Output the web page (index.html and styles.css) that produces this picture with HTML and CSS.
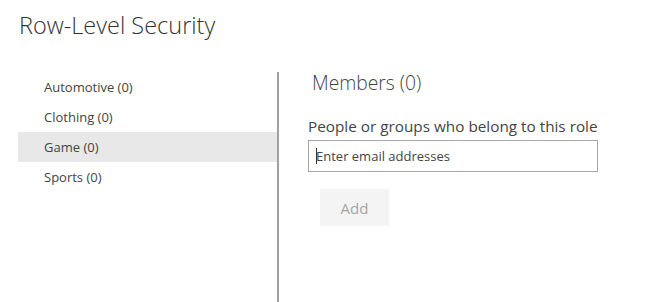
FILE: index.html
```html
<!DOCTYPE html>
<html lang="en">
<head>
  <meta charset="UTF-8" />
  <title>Row-Level Security</title>
  <link rel="stylesheet" href="styles.css">
</head>
<body>

<h1 class="title">Row-Level Security</h1>

<div class="rls">
  <ul class="roles">
    <li class="role">Automotive (0)</li>
    <li class="role">Clothing (0)</li>
    <li class="role selected">Game (0)</li>
    <li class="role">Sports (0)</li>
  </ul>

  <div class="members">
    <h2>Members (0)</h2>
    <label for="emails">People or groups who belong to this role</label>
    <div class="email-box">
      <span class="caret"></span>
      <input type="text" id="emails" placeholder="Enter email addresses" />
    </div>
    <button class="add" disabled>Add</button>
  </div>
</div>

</body>
</html>
```

FILE: styles.css
```css
body {
  font-family: "Open Sans", "Noto Sans", sans-serif;
  color: #333;
  background: #fff;
  margin: 0;
}

.title {
  font-size: 23.5px;
  font-weight: 300;
  color: #333;
  margin: 0;
  padding: 9px 0 0 19px;
  height: 72px;
  box-sizing: border-box;
}

.rls {
  display: flex;
  margin-left: 18px;
  height: 230px;
}

.roles {
  list-style: none;
  margin: 0;
  padding: 0;
  width: 259px;
  border-right: 2px solid #a0a0a0;
}

.role {
  height: 30px;
  line-height: 30px;
  padding-left: 26px;
  font-size: 13px;
  color: #444;
}

.role.selected {
  background-color: #e8e8e8;
}

.members {
  padding-left: 29px;
}

.members h2 {
  font-size: 19.3px;
  font-weight: 300;
  color: #444;
  margin: 0 0 0 4px;
  line-height: 22px;
}

.members label {
  display: block;
  font-size: 15.3px;
  color: #444;
  margin-top: 22px;
  line-height: 20px;
}

.email-box {
  position: relative;
  width: 288px;
  height: 30px;
  border: 1px solid #a6a6a6;
  margin-top: 4px;
}

.email-box input {
  border: none;
  outline: none;
  width: 100%;
  height: 100%;
  box-sizing: border-box;
  padding: 0 0 0 7px;
  font-family: inherit;
  font-size: 13px;
  background: transparent;
}

.email-box input::placeholder {
  color: #444;
}

.caret {
  position: absolute;
  left: 7px;
  top: 7px;
  width: 1px;
  height: 16px;
  background: #333;
}

.add {
  display: block;
  margin: 17px 0 0 12px;
  width: 69px;
  height: 37px;
  border: none;
  background-color: #f4f4f4;
  color: #a6a6a6;
  font-family: inherit;
  font-size: 15px;
}
```
